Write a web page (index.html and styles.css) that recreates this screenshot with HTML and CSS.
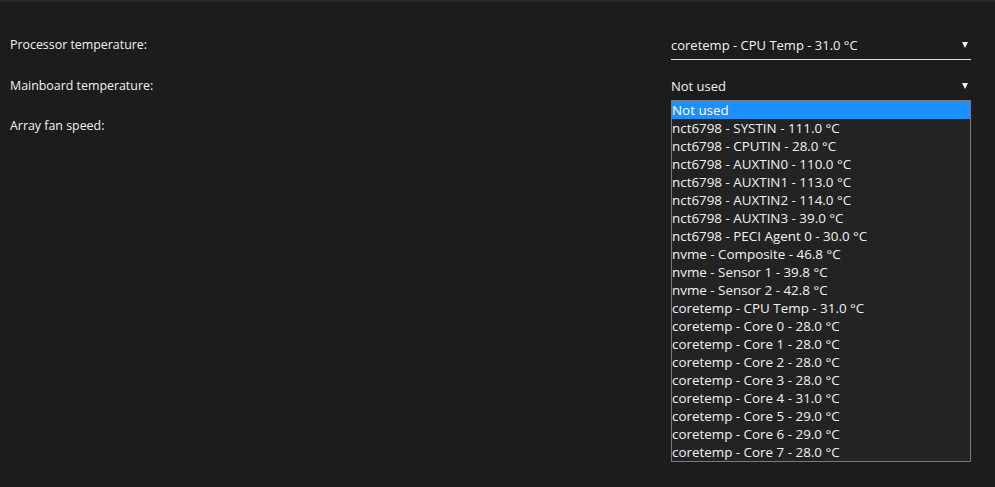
FILE: index.html
```html
<!DOCTYPE html>
<html>
<head>
<meta charset="utf-8">
<link rel="stylesheet" href="styles.css">
</head>
<body>
<div class="page">
  <div class="form">
    <div class="row first">
      <div class="label">Processor temperature:</div>
      <div class="field">
        <div class="select underlined"><span>coretemp - CPU Temp - 31.0 °C</span><span class="arrow"></span></div>
      </div>
    </div>
    <div class="row">
      <div class="label">Mainboard temperature:</div>
      <div class="field">
        <div class="select"><span>Not used</span><span class="arrow"></span></div>
        <ul class="list">
          <li class="sel">Not used</li>
          <li>nct6798 - SYSTIN - 111.0 °C</li>
          <li>nct6798 - CPUTIN - 28.0 °C</li>
          <li>nct6798 - AUXTIN0 - 110.0 °C</li>
          <li>nct6798 - AUXTIN1 - 113.0 °C</li>
          <li>nct6798 - AUXTIN2 - 114.0 °C</li>
          <li>nct6798 - AUXTIN3 - 39.0 °C</li>
          <li>nct6798 - PECI Agent 0 - 30.0 °C</li>
          <li>nvme - Composite - 46.8 °C</li>
          <li>nvme - Sensor 1 - 39.8 °C</li>
          <li>nvme - Sensor 2 - 42.8 °C</li>
          <li>coretemp - CPU Temp - 31.0 °C</li>
          <li>coretemp - Core 0 - 28.0 °C</li>
          <li>coretemp - Core 1 - 28.0 °C</li>
          <li>coretemp - Core 2 - 28.0 °C</li>
          <li>coretemp - Core 3 - 28.0 °C</li>
          <li>coretemp - Core 4 - 31.0 °C</li>
          <li>coretemp - Core 5 - 29.0 °C</li>
          <li>coretemp - Core 6 - 29.0 °C</li>
          <li>coretemp - Core 7 - 28.0 °C</li>
        </ul>
      </div>
    </div>
    <div class="row">
      <div class="label">Array fan speed:</div>
      <div class="field"></div>
    </div>
  </div>
</div>
</body>
</html>
```
FILE: styles.css
```css
html, body {
  margin: 0;
  padding: 0;
  background: #1c1c1c;
  height: 100%;
}
body {
  font-family: "Open Sans", "Noto Sans", sans-serif;
  font-size: 12.4px;
  color: #f2f2f2;
  border-top: 2px solid #2a2a2a;
  box-sizing: border-box;
  overflow: hidden;
}
.page {
  padding: 28px 0 0 10px;
}
.form {
  display: flex;
  flex-direction: column;
}
.row {
  display: grid;
  grid-template-columns: 661px 300px;
  height: 40px;
}
.row.first {
  height: 41px;
}
.label {
  line-height: 30px;
}
.field {
  position: relative;
}
.select {
  display: flex;
  justify-content: space-between;
  align-items: center;
  height: 30px;
  box-sizing: border-box;
  padding: 0 3px 0 0;
  font-size: 13px;
}
.select.underlined {
  border-bottom: 1px solid #e0e0e0;
}
.arrow {
  width: 0;
  height: 0;
  border-left: 3px solid transparent;
  border-right: 3px solid transparent;
  border-top: 6px solid #f2f2f2;
}
.list {
  position: absolute;
  left: 0;
  top: 29px;
  width: 300px;
  box-sizing: border-box;
  margin: 0;
  padding: 0;
  list-style: none;
  background: #232323;
  border: 1px solid #7a7a7a;
  font-size: 13.4px;
  z-index: 2;
}
.list li {
  height: 18px;
  line-height: 18px;
  white-space: nowrap;
}
.list li.sel {
  background: #1e8fff;
  color: #fff;
}
```
